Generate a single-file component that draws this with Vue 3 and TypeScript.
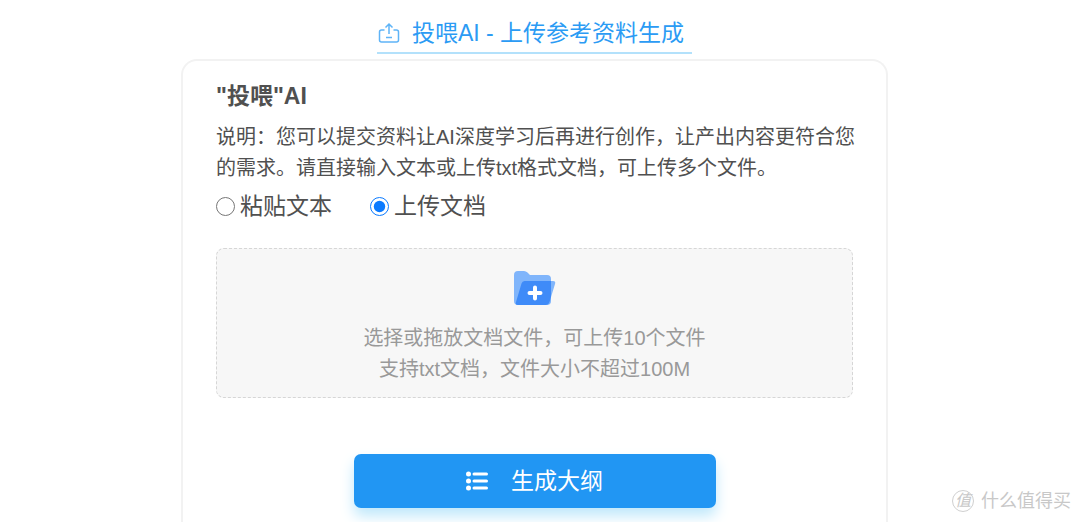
<script setup lang="ts">
import { ref } from 'vue'

type Mode = 'paste' | 'upload'

const mode = ref<Mode>('upload')
const modes: { value: Mode; label: string }[] = [
  { value: 'paste', label: '粘贴文本' },
  { value: 'upload', label: '上传文档' },
]
const notes: string[] = [
  '说明：您可以提交资料让AI深度学习后再进行创作，让产出内容更符合您',
  '的需求。请直接输入文本或上传txt格式文档，可上传多个文件。',
]
const hints: string[] = [
  '选择或拖放文档文件，可上传10个文件',
  '支持txt文档，文件大小不超过100M',
]
</script>

<template>
  <main class="page">
    <a class="title" href="#feed">
      <svg class="title-icon" viewBox="0 0 22 22" aria-hidden="true">
        <path d="M6.500 8H3.500Q1.500 8 1.500 10v8Q1.500 20 3.500 20h15q2 0 2-2v-8q0-2-2-2H15.500M11 12V2M7.500 5.500L11 2l3.500 3.500M8 15.500h6" />
      </svg>
      <span>投喂AI - 上传参考资料生成</span>
    </a>

    <section id="feed" class="card">
      <h1 class="heading">"投喂"AI</h1>
      <p class="note">
        <span v-for="line in notes" :key="line" class="line">{{ line }}</span>
      </p>

      <div class="modes" role="radiogroup" aria-label="资料来源">
        <label v-for="item in modes" :key="item.value" class="mode">
          <input v-model="mode" class="radio" type="radio" name="mode" :value="item.value" />
          <span>{{ item.label }}</span>
        </label>
      </div>

      <button class="drop" type="button">
        <svg class="folder" viewBox="0 0 42 34" aria-hidden="true">
          <path class="folder-light" d="M4 0h6q2 0 3.500 1.500L16 4h17q4 0 4 4v22q0 4-4 4H4q-4 0-4-4V4q0-4 4-4z" />
          <path class="folder-light" d="M11 10h28q3 0 2 3l-5.500 18q-1 3-4 3H4q-3 0-2-3L7.500 12.500Q8.300 10 11 10z" />
          <path class="folder-front" d="M10.500 10H37v16l-1.500 5q-1 3-4 3H4q-3 0-2-3L7.500 12.500Q8.300 10 10.500 10z" />
          <path class="folder-plus" d="M21 16.500v11M15.500 22h11" />
        </svg>
        <span v-for="line in hints" :key="line" class="line">{{ line }}</span>
      </button>

      <button class="submit" type="button">
        <svg class="list-icon" viewBox="0 0 22 20" aria-hidden="true">
          <path d="M8 3h12.500M8 10h12.500M8 17h12.500" />
          <circle cx="2.500" cy="3" r="2.500" />
          <circle cx="2.500" cy="10" r="2.500" />
          <circle cx="2.500" cy="17" r="2.500" />
        </svg>
        <span>生成大纲</span>
      </button>
    </section>

    <div class="watermark">
      <span class="seal">值</span>
      <span>什么值得买</span>
    </div>
  </main>
</template>

<style>
body {
  margin: 0;
  background: #fff;
}
</style>

<style scoped>
.page {
  position: relative;
  box-sizing: border-box;
  display: flex;
  flex-direction: column;
  align-items: center;
  min-height: 100vh;
  padding: 16px 11px 0 0;
  overflow: hidden;
  font-family: "Liberation Sans", "Noto Sans CJK SC", sans-serif;
  color: #505050;
}

.title {
  display: flex;
  align-items: center;
  gap: 12px;
  box-sizing: border-box;
  height: 38px;
  padding: 0 8px 2px 1px;
  border-bottom: 2px solid #b3e1fb;
  font-size: 23px;
  line-height: 32px;
  color: #2b9bf4;
  text-decoration: none;
  white-space: nowrap;
}

.title-icon {
  width: 22px;
  height: 22px;
  fill: none;
  stroke: #5fb4f7;
  stroke-width: 1.5;
}

.card {
  box-sizing: border-box;
  display: flex;
  flex: 1;
  flex-direction: column;
  width: 100%;
  max-width: 707px;
  margin-top: 5px;
  padding: 19px 33px 10px;
  border: 2px solid #f2f2f2;
  border-bottom: 0;
  border-radius: 16px 16px 0 0;
}

.heading {
  margin: 0;
  font-size: 23px;
  font-weight: 600;
  line-height: 32px;
}

.note {
  margin: 10px 0 0;
  font-size: 20px;
  line-height: 31px;
}

.line {
  display: block;
  white-space: nowrap;
}

.modes {
  display: flex;
  gap: 38px;
  margin-top: 6px;
  font-size: 23px;
  line-height: 32px;
}

.mode {
  display: flex;
  align-items: center;
  gap: 5px;
}

.radio {
  width: 19px;
  height: 19px;
  margin: 0;
  accent-color: #0a7aff;
}

.drop {
  display: flex;
  flex-direction: column;
  align-items: center;
  margin-top: 26px;
  padding: 22px 0 12px;
  border: 1px dashed #d6d6d6;
  border-radius: 8px;
  background: #f7f7f7;
  font-family: inherit;
  font-size: 20px;
  line-height: 31px;
  color: #999;
}

.folder {
  width: 42px;
  height: 34px;
  margin-bottom: 18px;
}

.folder-light {
  fill: #80b5fb;
}

.folder-front {
  fill: #3f8bf8;
}

.folder-plus {
  fill: none;
  stroke: #fff;
  stroke-width: 4;
  stroke-linecap: round;
}

.submit {
  display: flex;
  align-items: center;
  justify-content: center;
  gap: 23px;
  align-self: center;
  width: 362px;
  max-width: 100%;
  height: 54px;
  margin-top: 56px;
  padding: 0;
  border: 0;
  border-radius: 7px;
  background: #2196f3;
  box-shadow: 0 8px 14px #bfe8fb;
  font-family: inherit;
  font-size: 23px;
  line-height: 32px;
  color: #fff;
}

.list-icon {
  width: 22px;
  height: 20px;
  fill: #fff;
  stroke: #fff;
}

.list-icon path {
  stroke-width: 3;
  stroke-linecap: round;
}

.list-icon circle {
  stroke: none;
}

.watermark {
  position: absolute;
  right: 9px;
  bottom: 9px;
  display: flex;
  align-items: center;
  gap: 7px;
  font-size: 18px;
  line-height: 24px;
  color: #c8c8c8;
}

.seal {
  box-sizing: border-box;
  width: 22px;
  height: 22px;
  border: 1px solid #d0d0d0;
  border-radius: 50%;
  font-size: 16px;
  font-style: italic;
  line-height: 20px;
  text-align: center;
}
</style>
